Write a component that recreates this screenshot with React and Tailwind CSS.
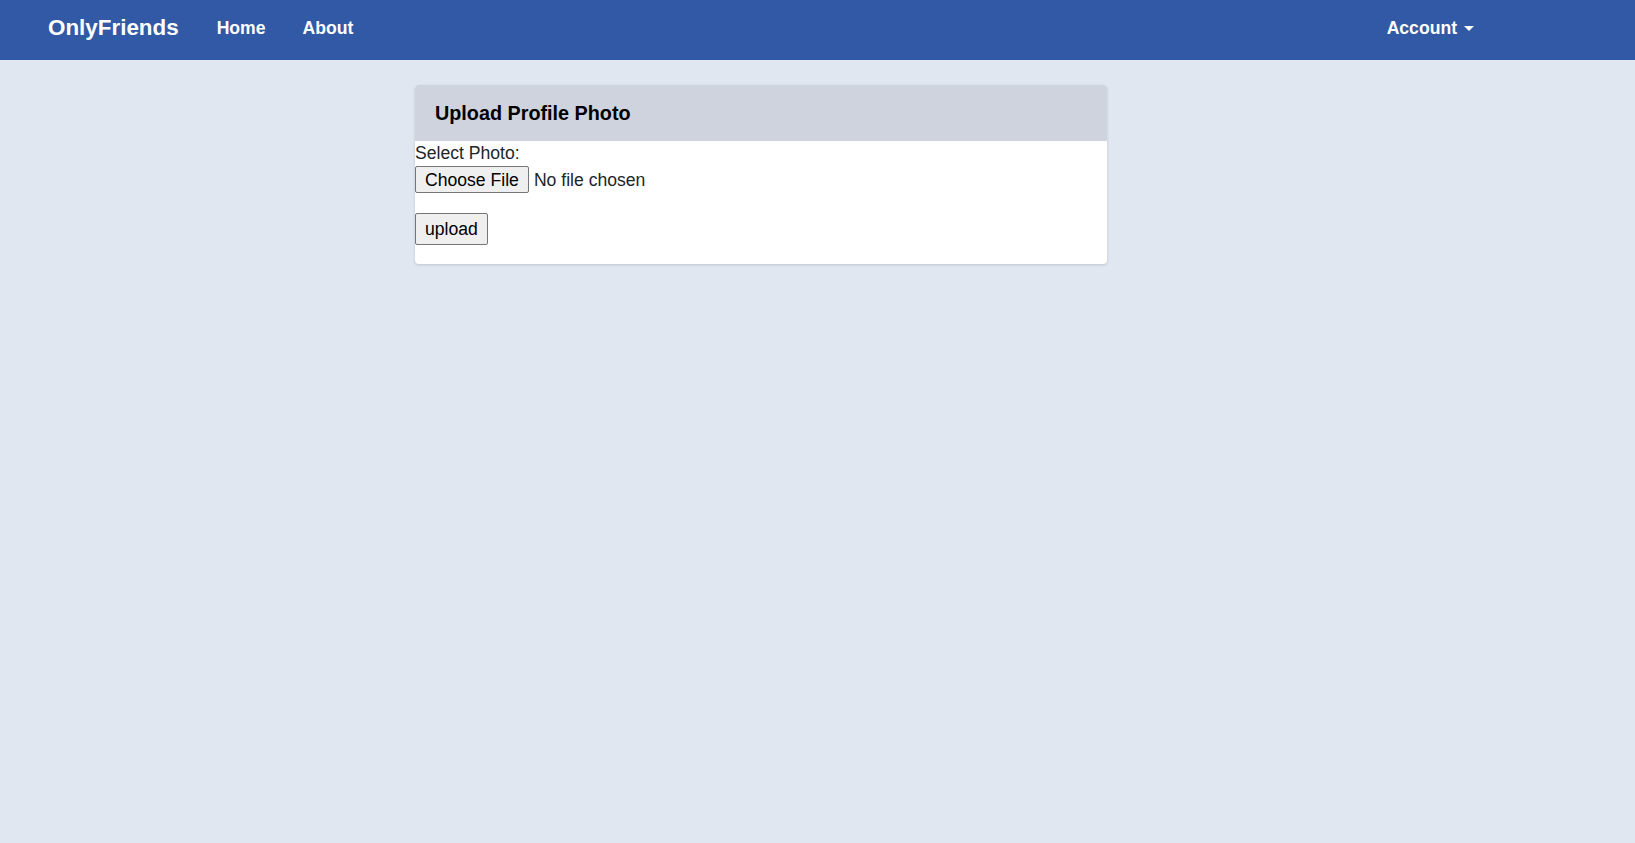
export default function App() {
  return (
    <div className="min-h-screen bg-[#e0e7f0] font-['Liberation_Sans',Arial,sans-serif] text-[#212529]">
      {/* Navbar */}
      <nav className="h-[60px] bg-[#3159a5] flex items-center pb-[4px] text-white font-bold">
        <div className="ml-[48px] text-[22.4px]">OnlyFriends</div>
        <a href="#" className="ml-[38px] text-[17.6px]">Home</a>
        <a href="#" className="ml-[37px] text-[17.6px]">About</a>
        <div className="ml-auto mr-[161px] flex items-center text-[17.6px]">
          <span>Account</span>
          <span className="ml-[7px] mt-[2px] w-0 h-0 border-t-[5px] border-t-white border-x-[5px] border-x-transparent"></span>
        </div>
      </nav>

      {/* Upload card */}
      <div className="ml-[415px] mt-[25px] w-[692px] bg-white rounded-[4px] shadow-[0_1px_3px_rgba(0,0,0,0.15)] overflow-hidden">
        <div className="h-[56px] bg-[#ced3de] flex items-center px-[20px] pt-[1px]">
          <h2 className="text-[19.8px] font-bold text-black">Upload Profile Photo</h2>
        </div>
        <form className="pt-[2px] pb-[19px]" onSubmit={e => e.preventDefault()}>
          <label className="block text-[17.6px] leading-[20px]">Select Photo:</label>
          <input
            type="file"
            className="mt-[3px] block text-[17.6px] leading-[20px] file:h-[27px] file:px-[9px] file:mr-[5px] file:border file:border-[#767676] file:rounded-[2px] file:bg-[#efefef] file:text-black"
          />
          <button
            type="submit"
            className="mt-[20px] h-[32px] px-[9px] text-[17.6px] border border-[#767676] rounded-[2px] bg-[#efefef] text-black"
          >
            upload
          </button>
        </form>
      </div>
    </div>
  );
}
